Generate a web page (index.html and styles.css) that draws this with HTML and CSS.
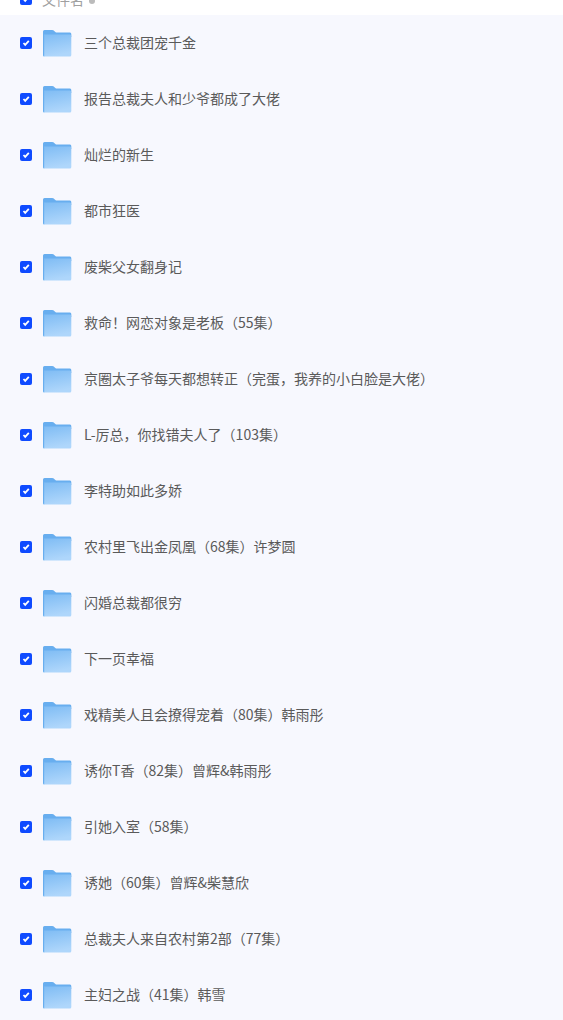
FILE: index.html
```html
<!DOCTYPE html>
<html lang="zh">
<head>
<meta charset="utf-8">
<title>文件列表</title>
<link rel="stylesheet" href="styles.css">
</head>
<body>
<svg class="defs" width="0" height="0" aria-hidden="true">
  <defs>
    <linearGradient id="fb" x1="0" y1="0" x2="0.25" y2="1">
      <stop offset="0" stop-color="#7fbcf4"/>
      <stop offset="1" stop-color="#aed6fb"/>
    </linearGradient>
    <symbol id="folder" viewBox="0 0 30 28">
      <path d="M1 2.500Q1 1 2.500 1H10Q11.500 1 12.500 2.200L14 3.500H28Q29.300 3.500 29.300 5V8H1Z" fill="#68aeef"/>
      <path d="M1 5.500H27.800Q29.300 5.500 29.300 7V26Q29.300 27.500 27.800 27.500H2.500Q1 27.500 1 26Z" fill="url(#fb)"/>
      <path d="M1 4V26Q1 27.500 2.500 27.500H2.200V6.500Q2.200 5.200 1 4Z" fill="#68aeef"/>
    </symbol>
  </defs>
</svg>
<div class="head">
  <div class="row-head">
    <span class="check"><svg viewBox="0 0 12 12"><path d="M3.500 6 5.200 7.800 8.800 3.800" /></svg></span>
    <span class="head-label">文件名</span>
    <span class="dot"></span>
  </div>
</div>
<ul class="list">
  <li class="row"><span class="check"><svg viewBox="0 0 12 12"><path d="M3.500 6 5.200 7.800 8.800 3.800"/></svg></span><svg class="folder"><use href="#folder"/></svg><span class="name">三个总裁团宠千金</span></li>
  <li class="row"><span class="check"><svg viewBox="0 0 12 12"><path d="M3.500 6 5.200 7.800 8.800 3.800"/></svg></span><svg class="folder"><use href="#folder"/></svg><span class="name">报告总裁夫人和少爷都成了大佬</span></li>
  <li class="row"><span class="check"><svg viewBox="0 0 12 12"><path d="M3.500 6 5.200 7.800 8.800 3.800"/></svg></span><svg class="folder"><use href="#folder"/></svg><span class="name">灿烂的新生</span></li>
  <li class="row"><span class="check"><svg viewBox="0 0 12 12"><path d="M3.500 6 5.200 7.800 8.800 3.800"/></svg></span><svg class="folder"><use href="#folder"/></svg><span class="name">都市狂医</span></li>
  <li class="row"><span class="check"><svg viewBox="0 0 12 12"><path d="M3.500 6 5.200 7.800 8.800 3.800"/></svg></span><svg class="folder"><use href="#folder"/></svg><span class="name">废柴父女翻身记</span></li>
  <li class="row"><span class="check"><svg viewBox="0 0 12 12"><path d="M3.500 6 5.200 7.800 8.800 3.800"/></svg></span><svg class="folder"><use href="#folder"/></svg><span class="name">救命！网恋对象是老板（55集）</span></li>
  <li class="row"><span class="check"><svg viewBox="0 0 12 12"><path d="M3.500 6 5.200 7.800 8.800 3.800"/></svg></span><svg class="folder"><use href="#folder"/></svg><span class="name">京圈太子爷每天都想转正（完蛋，我养的小白脸是大佬）</span></li>
  <li class="row"><span class="check"><svg viewBox="0 0 12 12"><path d="M3.500 6 5.200 7.800 8.800 3.800"/></svg></span><svg class="folder"><use href="#folder"/></svg><span class="name">L-厉总，你找错夫人了（103集）</span></li>
  <li class="row"><span class="check"><svg viewBox="0 0 12 12"><path d="M3.500 6 5.200 7.800 8.800 3.800"/></svg></span><svg class="folder"><use href="#folder"/></svg><span class="name">李特助如此多娇</span></li>
  <li class="row"><span class="check"><svg viewBox="0 0 12 12"><path d="M3.500 6 5.200 7.800 8.800 3.800"/></svg></span><svg class="folder"><use href="#folder"/></svg><span class="name">农村里飞出金凤凰（68集）许梦圆</span></li>
  <li class="row"><span class="check"><svg viewBox="0 0 12 12"><path d="M3.500 6 5.200 7.800 8.800 3.800"/></svg></span><svg class="folder"><use href="#folder"/></svg><span class="name">闪婚总裁都很穷</span></li>
  <li class="row"><span class="check"><svg viewBox="0 0 12 12"><path d="M3.500 6 5.200 7.800 8.800 3.800"/></svg></span><svg class="folder"><use href="#folder"/></svg><span class="name">下一页幸福</span></li>
  <li class="row"><span class="check"><svg viewBox="0 0 12 12"><path d="M3.500 6 5.200 7.800 8.800 3.800"/></svg></span><svg class="folder"><use href="#folder"/></svg><span class="name">戏精美人且会撩得宠着（80集）韩雨彤</span></li>
  <li class="row"><span class="check"><svg viewBox="0 0 12 12"><path d="M3.500 6 5.200 7.800 8.800 3.800"/></svg></span><svg class="folder"><use href="#folder"/></svg><span class="name">诱你T香（82集）曾辉&amp;韩雨彤</span></li>
  <li class="row"><span class="check"><svg viewBox="0 0 12 12"><path d="M3.500 6 5.200 7.800 8.800 3.800"/></svg></span><svg class="folder"><use href="#folder"/></svg><span class="name">引她入室（58集）</span></li>
  <li class="row"><span class="check"><svg viewBox="0 0 12 12"><path d="M3.500 6 5.200 7.800 8.800 3.800"/></svg></span><svg class="folder"><use href="#folder"/></svg><span class="name">诱她（60集）曾辉&amp;柴慧欣</span></li>
  <li class="row"><span class="check"><svg viewBox="0 0 12 12"><path d="M3.500 6 5.200 7.800 8.800 3.800"/></svg></span><svg class="folder"><use href="#folder"/></svg><span class="name">总裁夫人来自农村第2部（77集）</span></li>
  <li class="row"><span class="check"><svg viewBox="0 0 12 12"><path d="M3.500 6 5.200 7.800 8.800 3.800"/></svg></span><svg class="folder"><use href="#folder"/></svg><span class="name">主妇之战（41集）韩雪</span></li>
</ul>
</body>
</html>
```
FILE: styles.css
```css
html, body {
  margin: 0;
  padding: 0;
  height: 100%;
  overflow: hidden;
  background: #f7f8fe;
  font-family: "Noto Sans CJK SC", "Noto Sans", sans-serif;
}
.defs { display: block; height: 0; }
.head {
  height: 15px;
  background: #fff;
  overflow: hidden;
  display: flex;
  align-items: flex-start;
}
.row-head {
  display: flex;
  align-items: center;
  flex: none;
  height: 24px;
  margin-top: -13px;
  padding-left: 20px;
}
.head-label {
  margin-left: 10px;
  font-size: 14px;
  line-height: 20px;
  color: #a0a0a0;
}
.dot {
  width: 6px;
  height: 6px;
  margin-left: 5px;
  margin-top: 4px;
  border-radius: 50%;
  background: #bbb;
}
.list { list-style: none; margin: 0; padding: 0; }
.row {
  display: flex;
  align-items: center;
  height: 56px;
  padding-left: 20px;
  box-sizing: border-box;
}
.check {
  flex: none;
  width: 12px;
  height: 12px;
  border-radius: 2px;
  background: #0f4bff;
  display: flex;
}
.check svg { width: 12px; height: 12px; }
.check path { fill: none; stroke: #fff; stroke-width: 1.8; }
.folder {
  flex: none;
  width: 30px;
  height: 28px;
  margin-left: 10px;
}
.name {
  margin-left: 12px;
  margin-top: -2px;
  font-size: 14px;
  line-height: 20px;
  color: #5a5a5a;
  white-space: nowrap;
}
```
